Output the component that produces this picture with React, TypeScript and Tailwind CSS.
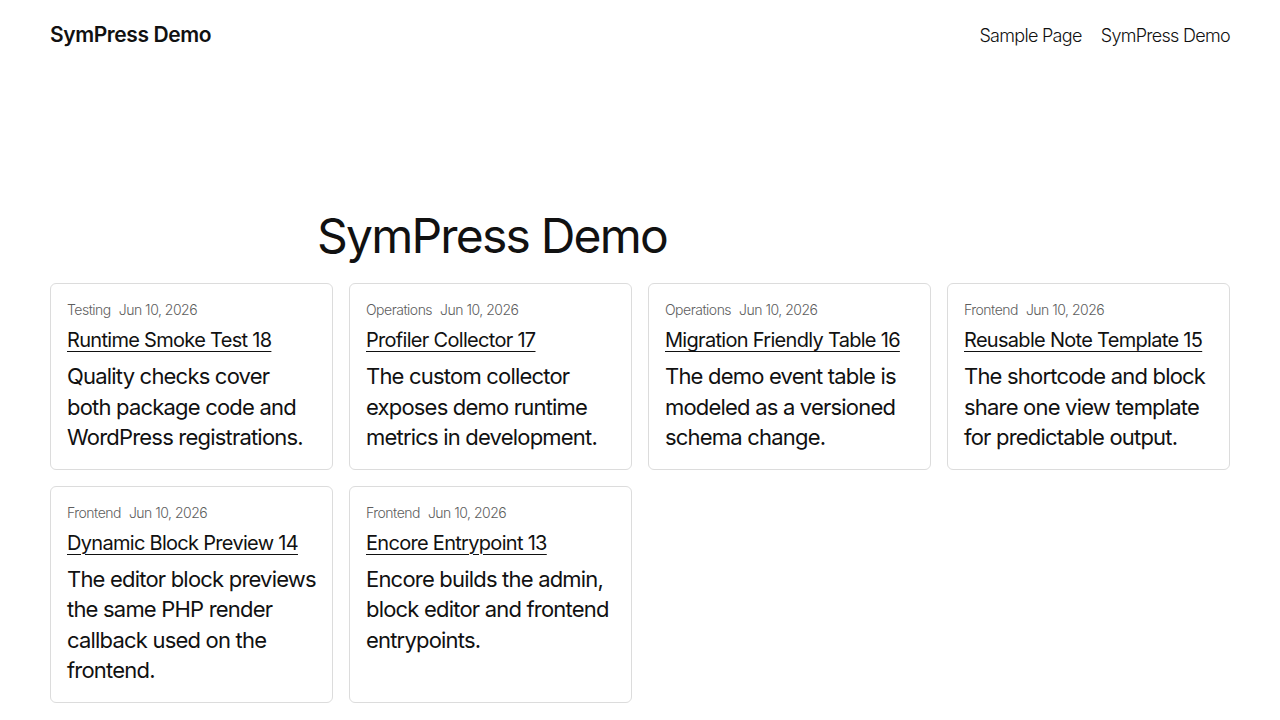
import React from "react";

const posts = [
  { cat: "Testing", title: "Runtime Smoke Test 18", text: "Quality checks cover both package code and WordPress registrations." },
  { cat: "Operations", title: "Profiler Collector 17", text: "The custom collector exposes demo runtime metrics in development." },
  { cat: "Operations", title: "Migration Friendly Table 16", text: "The demo event table is modeled as a versioned schema change." },
  { cat: "Frontend", title: "Reusable Note Template 15", text: "The shortcode and block share one view template for predictable output." },
  { cat: "Frontend", title: "Dynamic Block Preview 14", text: "The editor block previews the same PHP render callback used on the frontend." },
  { cat: "Frontend", title: "Encore Entrypoint 13", text: "Encore builds the admin, block editor and frontend entrypoints." },
];

export default function App() {
  return (
    <div
      className="min-h-[720px] bg-white text-[#111111] px-[50px]"
      style={{ fontFamily: "Inter, 'Noto Sans', sans-serif" }}
    >
      <header className="flex items-center justify-between h-[70px]">
        <div className="text-[21px] font-semibold tracking-[-0.4px]">SymPress Demo</div>
        <nav className="flex gap-[19px] text-[18px] tracking-[-0.7px] font-light">
          <a>Sample Page</a>
          <a>SymPress Demo</a>
        </nav>
      </header>
      <h1 className="mt-[137px] pl-[267px] text-[48px] leading-[58px] tracking-[-1.8px] font-normal">SymPress Demo</h1>
      <div className="mt-[18px] grid grid-cols-4 gap-[16px]">
        {posts.map((p) => (
          <div key={p.title} className="border border-[#dcdcdc] rounded-[6px] px-[16px] pt-[16px] pb-[16px]">
            <div className="text-[14px] leading-[20px] text-[#5e5e5e] tracking-[-0.5px] flex gap-[8px] font-light">
              <span>{p.cat}</span>
              <span>Jun 10, 2026</span>
            </div>
            <div className="mt-[6px] text-[20px] leading-[28px] tracking-[-0.7px]">
              <a className="underline underline-offset-[4px] decoration-1">{p.title}</a>
            </div>
            <p className="mt-[7px] text-[22px] leading-[30.5px] tracking-[-0.8px]">{p.text}</p>
          </div>
        ))}
      </div>
    </div>
  );
}
